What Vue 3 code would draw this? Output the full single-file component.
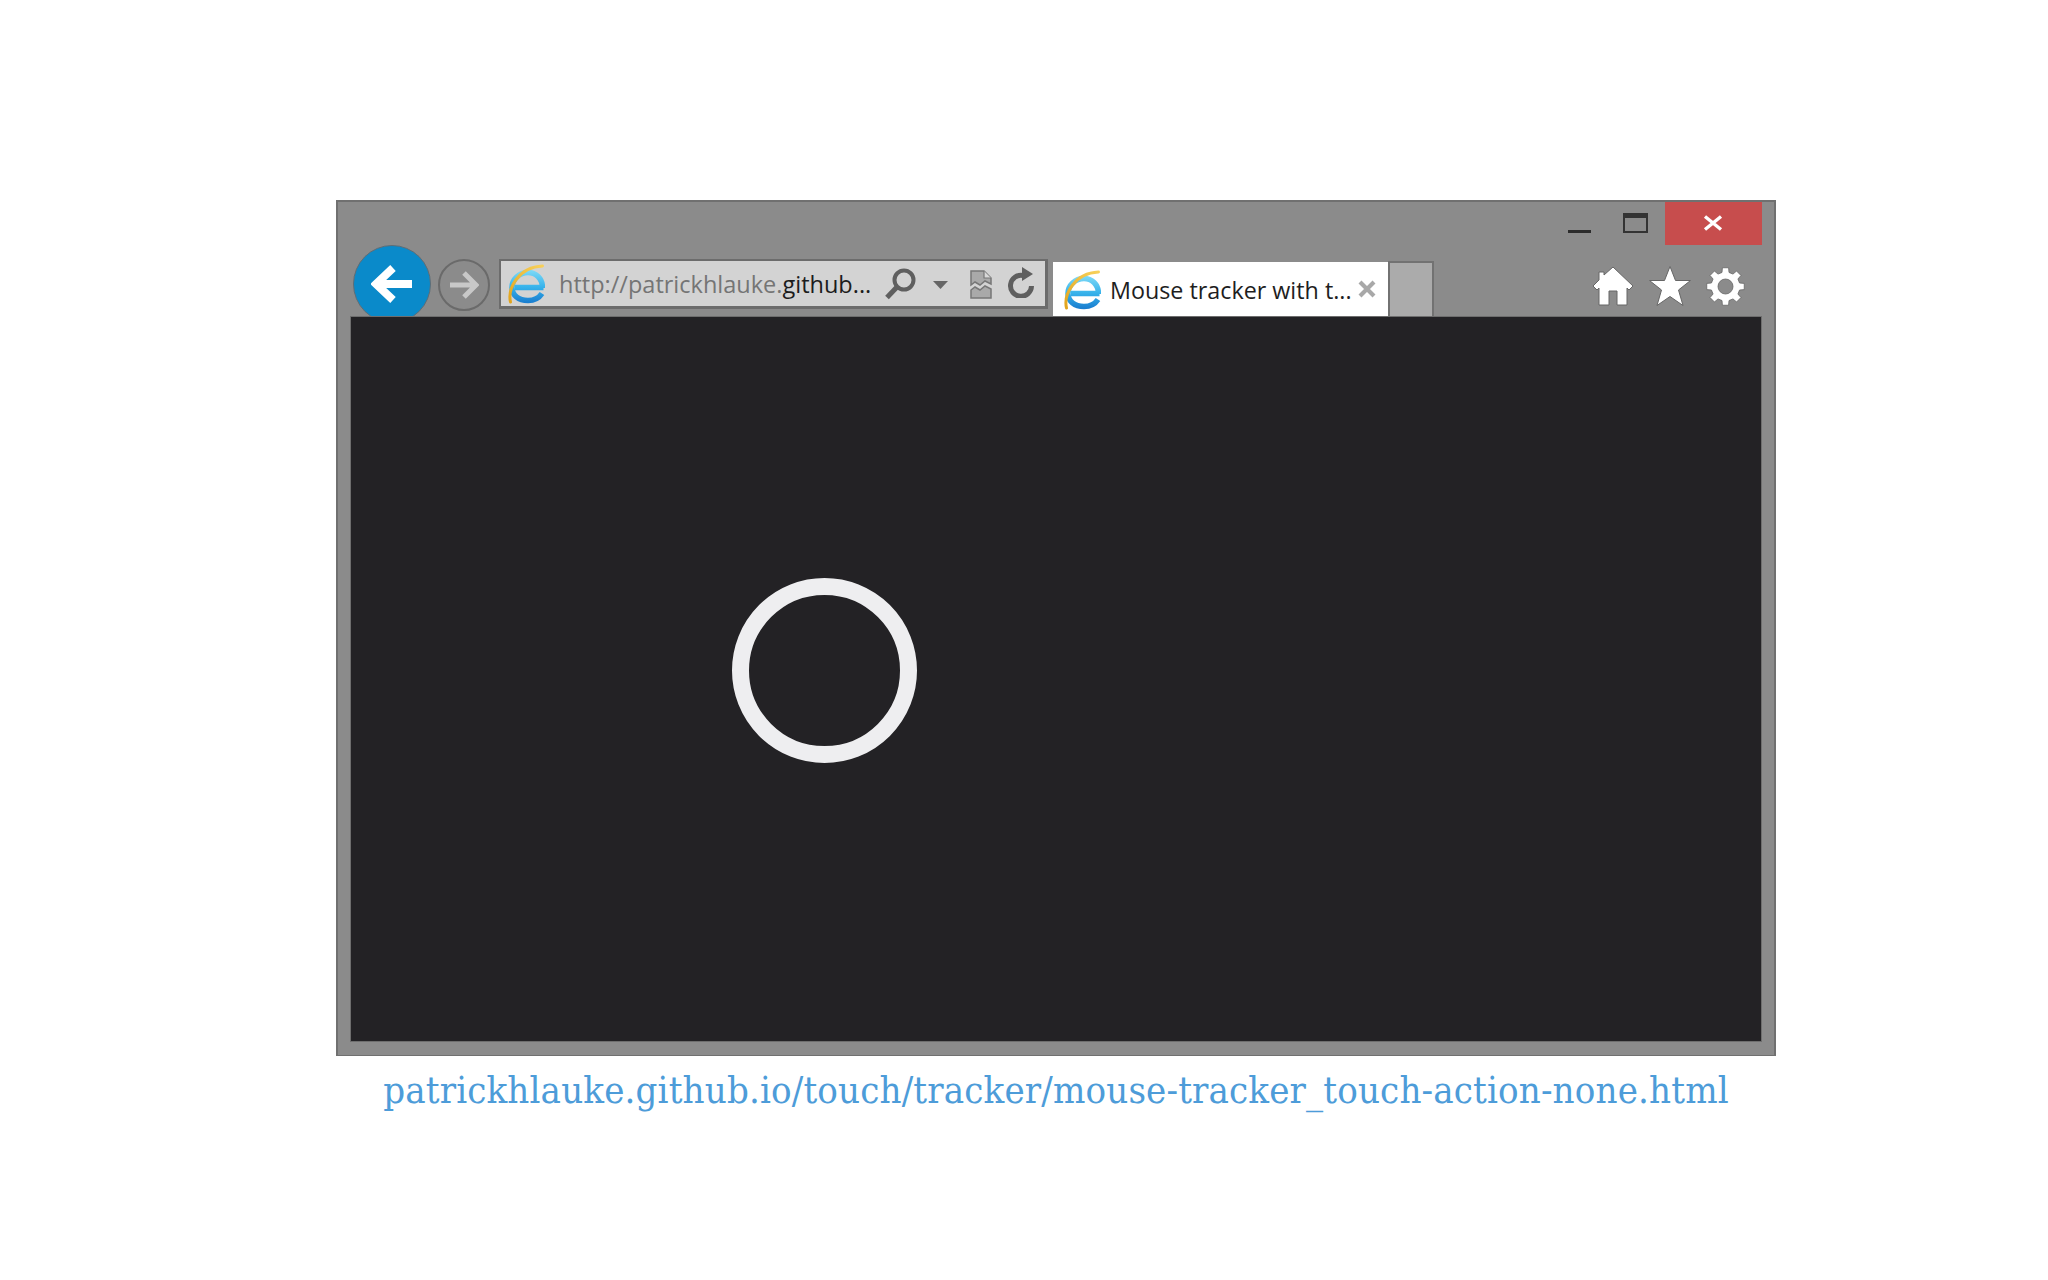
<script setup>
const cx = 19.5, cy = 19.5, teeth = 8, outer = 19, inner = 14.5;
let d = '';
for (let i = 0; i < teeth; i++) {
  const a = (i * 2 * Math.PI) / teeth - Math.PI / 2;
  const w = Math.PI / teeth;
  const pts = [
    [inner, a - w * 0.62],
    [outer, a - w * 0.42],
    [outer, a + w * 0.42],
    [inner, a + w * 0.62],
  ];
  pts.forEach(([r, t], j) => {
    const x = (cx + r * Math.cos(t)).toFixed(2);
    const y = (cy + r * Math.sin(t)).toFixed(2);
    d += (i === 0 && j === 0 ? 'M' : 'L') + x + ' ' + y + ' ';
  });
}
d += 'Z M' + (cx + 7.5) + ' ' + cy + ' A7.5 7.5 0 1 0 ' + (cx - 7.5) + ' ' + cy + ' A7.5 7.5 0 1 0 ' + (cx + 7.5) + ' ' + cy + ' Z';
const gearPath = d;
</script>

<template>
  <div class="page">
    <svg class="defs" width="0" height="0" aria-hidden="true">
      <defs>
        <linearGradient id="ieBlue" gradientUnits="userSpaceOnUse" x1="0" y1="6" x2="0" y2="38">
          <stop offset="0" stop-color="#7edaf7" />
          <stop offset="0.55" stop-color="#35b1ea" />
          <stop offset="1" stop-color="#1b7fd0" />
        </linearGradient>
        <linearGradient id="ieGold" gradientUnits="userSpaceOnUse" x1="2" y1="38" x2="34" y2="2">
          <stop offset="0" stop-color="#e2a41c" />
          <stop offset="1" stop-color="#f7d05a" />
        </linearGradient>
        <symbol id="ieLogo" viewBox="0 0 37 40">
          <path d="M7 23.500H35.500M34.500 24C34.500 14 27.500 8.500 20 8.500C11 8.500 4 15.500 4 23.500C4 31 10.500 36.500 20 36.500C26.500 36.500 31 34 34 29.500" fill="none" stroke="url(#ieBlue)" stroke-width="5.5" />
          <path d="M2.500 38C-0.500 25 10 3 34.500 2" fill="none" stroke="url(#ieGold)" stroke-width="3" stroke-linecap="round" />
        </symbol>
      </defs>
    </svg>

    <div class="window">
      <div class="titlebar">
        <span class="minimize"></span>
        <span class="maximize"></span>
        <span class="close">
          <svg width="20" height="16" viewBox="0 0 20 16"><path d="M2 1.500L18 14.500M18 1.500L2 14.500" stroke="#fff" stroke-width="3.4" /></svg>
        </span>
      </div>

      <div class="toolbar">
        <div class="back">
          <svg width="42" height="42" viewBox="0 0 42 42"><path d="M22 5L5 21L22 37M5 21H41" fill="none" stroke="#fff" stroke-width="8" /></svg>
        </div>
        <div class="forward">
          <svg width="30" height="28" viewBox="0 0 30 28"><path d="M15 2L27 14L15 26M27 14H1" fill="none" stroke="#c8c8c8" stroke-width="5" /></svg>
        </div>

        <div class="address">
          <svg class="addr-logo" width="37" height="40"><use href="#ieLogo" /></svg>
          <span class="url"><span class="dim">http://patrickhlauke.</span>github...</span>
          <svg class="search" width="32" height="32" viewBox="0 0 32 32">
            <circle cx="20" cy="12" r="9.500" fill="none" stroke="#5f5f5f" stroke-width="4" />
            <path d="M13 19L3 29.500" stroke="#5f5f5f" stroke-width="5" />
          </svg>
          <svg class="caret" width="15" height="8" viewBox="0 0 15 8"><path d="M0 0H15L7.500 8Z" fill="#666" /></svg>
          <svg class="broken" width="22" height="29" viewBox="0 0 22 29">
            <path d="M1 1H14L21 8V14L15 11L10 15L5 12L1 15Z" fill="#a9a9a9" stroke="#777" stroke-width="1.500" />
            <path d="M14 1V8H21" fill="#d8d8d8" stroke="#777" stroke-width="1.200" />
            <path d="M1 20L5 17L10 20L15 16L21 19V28H1Z" fill="#a9a9a9" stroke="#777" stroke-width="1.500" />
          </svg>
          <svg class="refresh" width="28" height="32" viewBox="0 0 28 32">
            <path d="M16 9.500A10.500 10.500 0 1 0 24.500 20" fill="none" stroke="#5f5f5f" stroke-width="5" />
            <path d="M15 1L26 8L15 15Z" fill="#5f5f5f" />
          </svg>
        </div>

        <div class="tab">
          <svg class="tab-logo" width="37" height="40"><use href="#ieLogo" /></svg>
          <span class="tab-title">Mouse tracker with t...</span>
          <svg class="tab-close" width="18" height="18" viewBox="0 0 18 18"><path d="M2 2L16 16M16 2L2 16" stroke="#a8a8a8" stroke-width="4.200" /></svg>
        </div>
        <div class="newtab"></div>

        <div class="tools">
          <svg width="42" height="40" viewBox="0 0 42 40">
            <path d="M21 1L41 20L37 24L35 22V39H25V25H17V39H7V22L5 24L1 20L7 14V6H12V9Z" fill="#fff" stroke="#666" stroke-width="1" />
          </svg>
          <svg class="star" width="42" height="40" viewBox="0 0 42 40">
            <path d="M21 0.500L26.500 14.500H41.500L29.500 24L34 39.500L21 30.500L8 39.500L12.500 24L0.500 14.500H15.500Z" fill="#fff" stroke="#666" stroke-width="1" />
          </svg>
          <svg width="39" height="39" viewBox="0 0 39 39">
            <path :d="gearPath" fill="#fff" fill-rule="evenodd" stroke="#666" stroke-width="0.800" />
          </svg>
        </div>
      </div>

      <div class="viewport">
        <div class="pointer"></div>
      </div>
    </div>

    <p class="caption">patrickhlauke.github.io/touch/tracker/mouse-tracker_touch-action-none.html</p>
  </div>
</template>

<style>
html, body { margin: 0; background: #fff; }
</style>

<style scoped>
.page {
  width: 2048px;
  height: 1280px;
  padding: 200px 0 0 336px;
  box-sizing: border-box;
  overflow: hidden;
  background: #fff;
}
.defs { position: absolute; }
.window {
  width: 1440px;
  height: 856px;
  box-sizing: border-box;
  border: 2px solid #707070;
  border-bottom-width: 1px;
  background: #8b8b8b;
  padding: 0 13px 14px;
  display: flex;
  flex-direction: column;
}
.titlebar {
  height: 43px;
  flex: none;
  display: flex;
  justify-content: flex-end;
  margin-right: -1px;
}
.minimize {
  width: 23px;
  height: 3px;
  background: #2c2c2c;
  margin: 28px 32px 0 0;
}
.maximize {
  width: 25px;
  height: 20px;
  box-sizing: border-box;
  border: 2px solid #333;
  border-top-width: 5px;
  margin: 11px 17px 0 0;
}
.close {
  width: 97px;
  height: 43px;
  box-sizing: border-box;
  padding: 0 2px 2px 0;
  background: #c74d4d;
  display: flex;
  align-items: center;
  justify-content: center;
}
.toolbar {
  height: 72px;
  flex: none;
  display: flex;
  align-items: flex-start;
  overflow: hidden;
  padding-left: 2px;
}
.back {
  width: 78px;
  height: 78px;
  flex: none;
  box-sizing: border-box;
  border-radius: 50%;
  background: #0a8aca;
  border: 1.5px solid #5f6d76;
  display: flex;
  align-items: center;
  justify-content: center;
}
.forward {
  width: 52px;
  height: 52px;
  flex: none;
  box-sizing: border-box;
  margin: 14px 0 0 7px;
  border-radius: 50%;
  border: 2px solid #6a6a6a;
  display: flex;
  align-items: center;
  justify-content: center;
}
.address {
  width: 549px;
  height: 50px;
  flex: none;
  box-sizing: border-box;
  margin: 14px 0 0 9px;
  background: #d3d3d3;
  border: 2px solid #6c6c6c;
  border-right-width: 3px;
  border-bottom-width: 3px;
  display: flex;
  align-items: center;
}
.addr-logo { margin-left: 7px; flex: none; }
.url {
  margin-left: 14px;
  width: 317px;
  flex: none;
  padding-top: 1px;
  font: 23.5px "Open Sans", sans-serif;
  color: #1c1c1c;
  white-space: nowrap;
}
.dim { color: #757575; }
.search { flex: none; margin-left: 8px; }
.caret { flex: none; margin: 2px 0 0 17px; }
.broken { flex: none; margin: 2px 0 0 22px; }
.refresh { flex: none; margin: -3px 0 0 15px; }
.tab {
  width: 335px;
  height: 54px;
  flex: none;
  box-sizing: border-box;
  margin: 17px 0 0 5px;
  background: #fff;
  display: flex;
  align-items: center;
  padding-left: 11px;
}
.tab-logo { flex: none; margin-top: 1px; }
.tab-title {
  margin-left: 9px;
  width: 248px;
  flex: none;
  padding-top: 1px;
  font: 23.3px "Open Sans", sans-serif;
  color: #1e1e1e;
  white-space: nowrap;
}
.tab-close { flex: none; }
.newtab {
  width: 46px;
  height: 56px;
  flex: none;
  box-sizing: border-box;
  margin-top: 16px;
  background: #ababab;
  border: 2px solid #727272;
  border-bottom: 0;
}
.tools {
  margin: 21px 0 0 auto;
  padding-right: 16px;
  display: flex;
  align-items: center;
  gap: 15px;
}
.viewport {
  flex: 1;
  background: #232225;
  box-shadow: 0 0 0 1px #6e6e6e;
  position: relative;
}
.pointer {
  position: absolute;
  left: 381px;
  top: 261px;
  width: 185px;
  height: 185px;
  box-sizing: border-box;
  border: 17px solid #eeeef0;
  border-radius: 50%;
}
.caption {
  width: 1440px;
  margin: 10px 0 0;
  text-align: center;
  font: 38px/48px "DejaVu Serif", serif;
  font-stretch: condensed;
  letter-spacing: 0.15px;
  color: #4d9cd9;
  white-space: nowrap;
}
</style>
